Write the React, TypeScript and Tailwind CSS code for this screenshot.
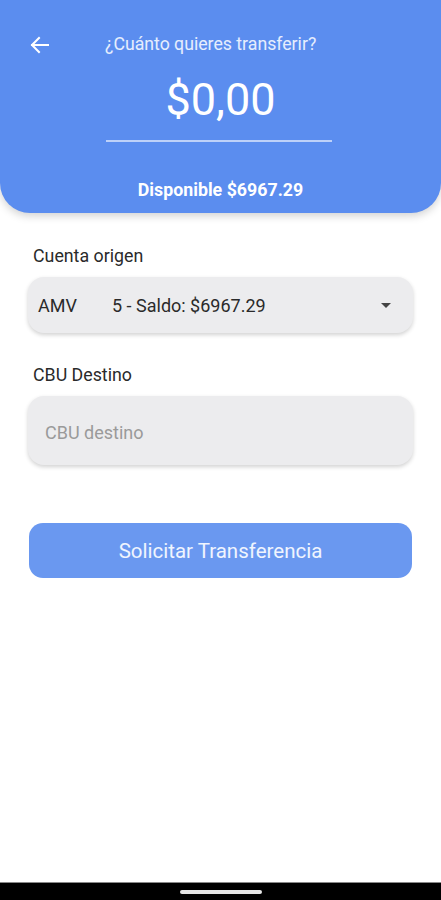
import React from "react";

export default function App() {
  return (
    <div
      className="w-[441px] h-[900px] bg-white relative flex flex-col overflow-hidden"
      style={{ fontFamily: "Roboto, 'Noto Sans', sans-serif" }}
    >
      <div className="bg-[#5b8def] rounded-b-[30px] h-[213px] shadow-[0_3px_8px_rgba(0,0,0,0.18)] flex flex-col items-center relative z-10">
        <div className="w-full flex items-center pt-[31px] h-[58px]">
          <div className="w-[28px]" />
          <svg width="24" height="24" viewBox="0 0 24 24" className="shrink-0">
            <path
              d="M20 12H4M11 5l-7 7 7 7"
              fill="none"
              stroke="white"
              strokeWidth="2"
              strokeLinecap="square"
            />
          </svg>
          <div className="ml-[53px] text-[17.7px] text-white/85">¿Cuánto quieres transferir?</div>
        </div>
        <div className="mt-[17px] text-[45px] leading-[50px] text-white font-normal">$0,00</div>
        <div className="mt-[15px] w-[226px] h-[1.5px] bg-white/60 ml-[-4px]" />
        <div className="mt-[35px] text-[17.8px] font-bold text-white">Disponible $6967.29</div>
      </div>

      <div className="px-[28px] flex flex-col">
        <div className="mt-[32px] ml-[5px] text-[17.8px] text-[#2a2a2a] leading-[21px]">Cuenta origen</div>
        <div className="mt-[11px] h-[56px] rounded-[16px] bg-[#ececee] shadow-[0_2px_4px_rgba(0,0,0,0.18)] flex items-center pl-[10px] pr-[22px] text-[18px] text-[#2a2a2a]">
          <span className="w-[74px]">AMV</span>
          <span className="flex-1">5 - Saldo: $6967.29</span>
          <svg width="10" height="5" viewBox="0 0 10 5">
            <path d="M0 0h10L5 5z" fill="#444" />
          </svg>
        </div>
        <div className="mt-[31px] ml-[5px] text-[17.8px] text-[#2a2a2a] leading-[21px]">CBU Destino</div>
        <div className="mt-[11px] h-[69px] rounded-[16px] bg-[#ececee] shadow-[0_2px_4px_rgba(0,0,0,0.18)] flex items-center pl-[17px] pt-[3px] text-[18px] text-[#9a9a9a]">
          CBU destino
        </div>
        <div className="mt-[58px] mx-[1px] h-[55px] rounded-[14px] bg-[#6a98f0] flex items-center justify-center pt-[2px] text-[20.5px] text-white/90">
          Solicitar Transferencia
        </div>
      </div>

      <div className="mt-auto h-[18px] bg-black border-t border-[#888] flex items-center justify-center">
        <div className="w-[82px] h-[4px] rounded-full bg-white/90" />
      </div>
    </div>
  );
}
